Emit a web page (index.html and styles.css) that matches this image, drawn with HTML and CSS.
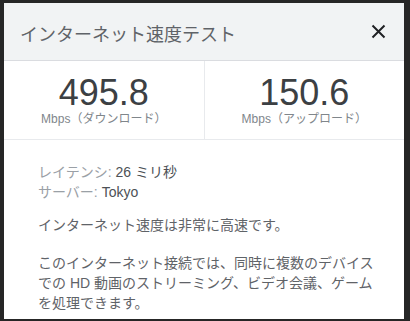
FILE: index.html
```html
<!DOCTYPE html>
<html lang="ja">
<head>
<meta charset="utf-8">
<link rel="stylesheet" href="styles.css">
</head>
<body>
<div class="dialog">
  <div class="header">
    <div class="title">インターネット速度テスト</div>
    <button class="close" aria-label="閉じる">
      <svg width="15" height="15" viewBox="0 0 15 15"><path d="M1.5 1.5 L13.5 13.5 M13.5 1.5 L1.5 13.5" stroke="#202124" stroke-width="2" fill="none"/></svg>
    </button>
  </div>
  <div class="stats">
    <div class="stat">
      <div class="num">495.8</div>
      <div class="unit">Mbps（ダウンロード）</div>
    </div>
    <div class="stat">
      <div class="num">150.6</div>
      <div class="unit">Mbps（アップロード）</div>
    </div>
  </div>
  <div class="details">
    <div class="meta">
      <div><span class="lbl">レイテンシ:</span> <span class="val">26 ミリ秒</span></div>
      <div><span class="lbl">サーバー:</span> <span class="val">Tokyo</span></div>
    </div>
    <p class="summary">インターネット速度は非常に高速です。</p>
    <p class="desc">このインターネット接続では、同時に複数のデバイスでの HD 動画のストリーミング、ビデオ会議、ゲームを処理できます。</p>
  </div>
</div>
</body>
</html>
```
FILE: styles.css
```css
html, body {
  margin: 0;
  height: 100%;
}
body {
  background: #262626;
  padding: 3px 6px 2px 4px;
  box-sizing: border-box;
  font-family: "Liberation Sans", Arial, "Noto Sans CJK JP", sans-serif;
  overflow: hidden;
}
.dialog {
  background: #fff;
  height: 100%;
  display: flex;
  flex-direction: column;
}
.header {
  background: #f1f3f4;
  height: 57px;
  border-bottom: 1px solid #dadce0;
  display: flex;
  align-items: flex-start;
  justify-content: space-between;
  padding: 0 18px 0 16px;
}
.title {
  margin-top: 22px;
  font-size: 18px;
  line-height: 20px;
  color: #5f6368;
}
.close {
  margin-top: 21px;
  padding: 0;
  border: 0;
  background: none;
  width: 15px;
  height: 15px;
  display: block;
}
.close svg { display: block; }
.stats {
  display: flex;
  border-bottom: 1px solid #e8eaed;
}
.stat {
  flex: 1;
  text-align: center;
  padding: 12px 0 14px;
}
.stat + .stat {
  border-left: 1px solid #e8eaed;
}
.num {
  font-size: 36px;
  line-height: 40px;
  color: #3c4043;
}
.unit {
  font-size: 12px;
  line-height: 12px;
  color: #80868b;
}
.details {
  padding: 22px 26px 0 34px;
  font-size: 14px;
  line-height: 20px;
  color: #5f6368;
}
.lbl { color: #9aa0a6; }
.val { color: #4d5156; }
.summary {
  margin: 13px 0 0;
}
.desc {
  margin: 18px 0 0;
}
```
